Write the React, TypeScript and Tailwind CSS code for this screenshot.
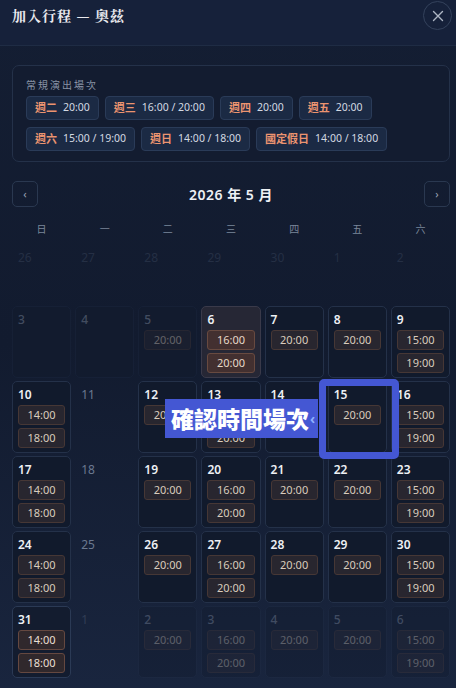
import React from 'react';

type Kind = 'prev' | 'past' | 'normal' | 'empty' | 'today' | 'last' | 'nextEmpty' | 'next';

interface Day {
  num: number;
  kind: Kind;
  slots: string[];
}

const regular = [
  [
    { day: '週二', time: '20:00' },
    { day: '週三', time: '16:00 / 20:00' },
    { day: '週四', time: '20:00' },
    { day: '週五', time: '20:00' },
  ],
  [
    { day: '週六', time: '15:00 / 19:00' },
    { day: '週日', time: '14:00 / 18:00' },
    { day: '國定假日', time: '14:00 / 18:00' },
  ],
];

const weekdays = ['日', '一', '二', '三', '四', '五', '六'];

const sun = ['14:00', '18:00'];
const sat = ['15:00', '19:00'];
const wed = ['16:00', '20:00'];
const eve = ['20:00'];

const d = (num: number, kind: Kind, slots: string[] = []): Day => ({ num, kind, slots });

const weeks: Day[][] = [
  [d(26, 'prev'), d(27, 'prev'), d(28, 'prev'), d(29, 'prev'), d(30, 'prev'), d(1, 'prev'), d(2, 'prev')],
  [d(3, 'past'), d(4, 'past'), d(5, 'past', eve), d(6, 'today', wed), d(7, 'normal', eve), d(8, 'normal', eve), d(9, 'normal', sat)],
  [d(10, 'normal', sun), d(11, 'empty'), d(12, 'normal', eve), d(13, 'normal', wed), d(14, 'normal', eve), d(15, 'normal', eve), d(16, 'normal', sat)],
  [d(17, 'normal', sun), d(18, 'empty'), d(19, 'normal', eve), d(20, 'normal', wed), d(21, 'normal', eve), d(22, 'normal', eve), d(23, 'normal', sat)],
  [d(24, 'normal', sun), d(25, 'empty'), d(26, 'normal', eve), d(27, 'normal', wed), d(28, 'normal', eve), d(29, 'normal', eve), d(30, 'normal', sat)],
  [d(31, 'last', sun), d(1, 'nextEmpty'), d(2, 'next', eve), d(3, 'next', wed), d(4, 'next', eve), d(5, 'next', eve), d(6, 'next', sat)],
];

const cellClass = (kind: Kind) => {
  switch (kind) {
    case 'prev':
      return 'border border-transparent opacity-25';
    case 'past':
      return 'border border-[#1c2840] bg-[#121b2d] opacity-40';
    case 'empty':
      return 'border border-transparent';
    case 'nextEmpty':
      return 'border border-transparent opacity-30';
    case 'next':
      return 'border border-[#222f47] bg-[#121b2d] opacity-35';
    case 'today':
      return 'border border-[#3a3a4a] bg-[#262735]';
    case 'last':
      return 'border border-[#2b3a55] bg-[#131c2f]';
    default:
      return 'border border-[#243149] bg-[#111a2c]';
  }
};

const numClass = (kind: Kind) => {
  if (kind === 'prev') return 'text-[#5a6880] font-normal';
  if (kind === 'empty' || kind === 'nextEmpty') return 'text-[#6b7990] font-normal';
  if (kind === 'past' || kind === 'next') return 'text-[#8a96a8] font-medium';
  return 'text-[#eef0f4] font-semibold';
};

const slotClass = (kind: Kind) => {
  if (kind === 'today') return 'bg-[#433030] border-[#684a40] text-[#e6d8c8]';
  if (kind === 'last') return 'bg-[#30282c] border-[#654840] text-[#eadfd2]';
  return 'bg-[#28262f] border-[#463735] text-[#d9ccbd]';
};

const DayCell: React.FC<{ day: Day }> = ({ day }) => (
  <div className={`rounded-[5px] px-[5px] pb-[5px] ${cellClass(day.kind)}`}>
    <div className={`h-[28px] pt-[5px] text-[12px] leading-[16px] ${numClass(day.kind)}`}>{day.num}</div>
    <div className="flex flex-col gap-[3px] -mt-[5px]">
      {day.slots.map((s) => (
        <div
          key={s}
          className={`h-[20px] rounded-[3px] border flex items-center justify-center text-[11px] ${slotClass(day.kind)}`}
        >
          {s}
        </div>
      ))}
    </div>
  </div>
);

export default function App() {
  return (
    <div
      className="relative w-[456px] h-[688px] overflow-hidden bg-gradient-to-b from-[#141e33] via-[#121b2f] to-[#19253e]"
      style={{ fontFamily: '"Noto Sans", "Noto Sans CJK TC", sans-serif' }}
    >
      {/* header */}
      <div className="h-[46px] flex items-center justify-between pl-3 pr-1 border-b border-[#1f2c44] bg-[#16213a]">
        <h1
          className="text-[14px] font-bold tracking-[1px] text-[#e9e9ee] -mt-[14px]"
          style={{ fontFamily: '"Noto Serif CJK TC", "Noto Sans CJK TC", serif' }}
        >
          加入行程 — 奧茲
        </h1>
        <button className="w-[29px] h-[29px] rounded-full border border-[#34425c] flex items-center justify-center -mt-[14px]">
          <svg width="12" height="12" viewBox="0 0 12 12" fill="none" stroke="#aeb6c4" strokeWidth="1.4" strokeLinecap="round">
            <path d="M1.5 1.5l9 9M10.5 1.5l-9 9" />
          </svg>
        </button>
      </div>

      <div className="pl-3 pr-[6px]">
        {/* regular schedule */}
        <div className="mt-[19px] rounded-[7px] border border-[#243149] bg-[#131c30] pl-[13px] pr-3 pt-[12px] pb-[10px]">
          <p className="text-[10px] leading-[14px] tracking-[2px] text-[#8893a5]">常規演出場次</p>
          <div className="mt-[4px] flex flex-col gap-[7px]">
            {regular.map((row, i) => (
              <div key={i} className="flex gap-[6px]">
                {row.map((c) => (
                  <div
                    key={c.day}
                    className="h-[24px] flex items-center gap-[6px] px-[8px] rounded-[4px] border border-[#2a3b58] bg-[#1b2a44]"
                  >
                    <span className="text-[11px] font-bold text-[#ec9470]">{c.day}</span>
                    <span className="text-[10.5px] text-[#d3d9e2]">{c.time}</span>
                  </div>
                ))}
              </div>
            ))}
          </div>
        </div>

        {/* month nav */}
        <div className="mt-[19px] flex items-center justify-between">
          <button className="w-[26px] h-[26px] rounded-[5px] border border-[#2a3850] flex items-center justify-center text-[#9aa4b4] text-[11px]">
            ‹
          </button>
          <div className="text-[14px] font-semibold tracking-[0.5px] text-[#eef0f4]">2026 年 5 月</div>
          <button className="w-[26px] h-[26px] rounded-[5px] border border-[#2a3850] flex items-center justify-center text-[#9aa4b4] text-[11px]">
            ›
          </button>
        </div>

        {/* weekday labels */}
        <div className="mt-[14px] grid grid-cols-7 gap-x-1">
          {weekdays.map((w) => (
            <div key={w} className="text-center text-[10px] leading-[16px] text-[#7b879a]">
              {w}
            </div>
          ))}
        </div>

        {/* days */}
        <div className="mt-[7px] grid grid-cols-7 gap-x-1 gap-y-[3px] [grid-template-rows:59px_repeat(5,72px)]">
          {weeks.flat().map((day, i) => (
            <DayCell key={i} day={day} />
          ))}
        </div>
      </div>

      {/* tutorial highlight */}
      <div className="absolute left-[319px] top-[379px] w-[80px] h-[80px] rounded-[5px] border-[7px] border-[#4457d3]" />
      <div className="absolute left-[165px] top-[399px] h-[39px] flex items-center whitespace-nowrap bg-[#4457d3] pl-[6px] pr-[3px]">
        <span className="text-[23px] font-black leading-none text-white" style={{ fontFamily: '"Noto Sans CJK TC", sans-serif' }}>
          確認時間場次
        </span>
        <span className="ml-[1px] text-[14px] font-bold text-[#8fb0ff]">‹</span>
      </div>
    </div>
  );
}
